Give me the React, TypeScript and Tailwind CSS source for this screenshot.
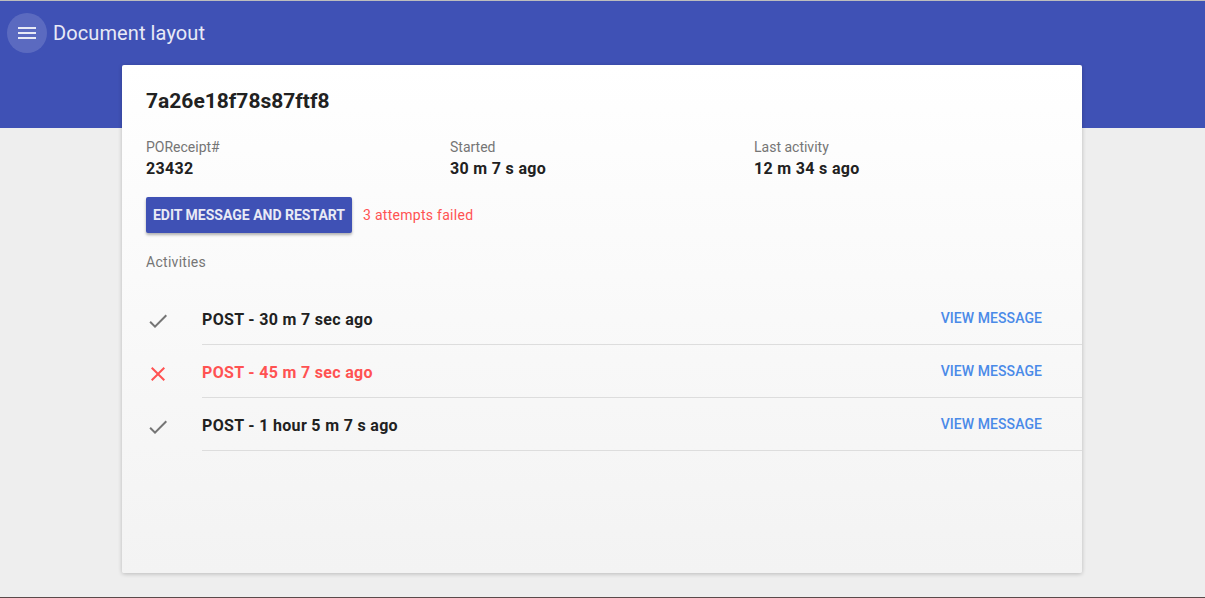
import React from "react";

const font = { fontFamily: "Roboto, 'Noto Sans', sans-serif" };

function Check() {
  return (
    <svg width="24" height="24" viewBox="0 0 24 24" className="shrink-0">
      <path d="M9 16.17L4.83 12l-1.42 1.41L9 19 21 7l-1.41-1.41z" fill="#757575" />
    </svg>
  );
}

function Cross() {
  return (
    <svg width="24" height="24" viewBox="0 0 24 24" className="shrink-0">
      <path
        d="M19 6.41L17.59 5 12 10.59 6.41 5 5 6.41 10.59 12 5 17.59 6.41 19 12 13.41 17.59 19 19 17.59 13.41 12z"
        fill="#ff5252"
      />
    </svg>
  );
}

const rows = [
  { text: "POST - 30 m 7 sec ago", ok: true },
  { text: "POST - 45 m 7 sec ago", ok: false },
  { text: "POST - 1 hour 5 m 7 s ago", ok: true },
];

export default function App() {
  return (
    <div
      className="w-[1205px] h-[598px] bg-[#eeeeee] border-t border-t-[#bdbdbd] border-b border-b-[#5a4a4a] overflow-hidden"
      style={font}
    >
      <div className="h-[127px] bg-[#3f51b5]">
        <div className="h-[64px] flex items-center pl-[7px]">
          <div className="w-[40px] h-[40px] rounded-full bg-white/15 flex items-center justify-center">
            <svg width="24" height="24" viewBox="0 0 24 24">
              <path d="M3 18h18v-2H3v2zm0-5h18v-2H3v2zm0-7v2h18V6H3z" fill="#e8eaf6" />
            </svg>
          </div>
          <div className="ml-[6px] text-[20px] text-[#e8eaf6] leading-none tracking-[0.005em]">Document layout</div>
        </div>
      </div>
      <div className="relative -mt-[63px] ml-[122px] w-[960px] h-[508px] rounded-[2px] bg-gradient-to-b from-white to-[#f3f3f3] shadow-[0_1px_4px_rgba(0,0,0,0.22)]">
        <div className="pt-[22px] pl-[24px]">
          <div className="text-[21px] font-bold text-[#212121] leading-[28px]">7a26e18f78s87ftf8</div>
          <div className="mt-[23px] grid grid-cols-3 w-[912px]">
            {[
              ["POReceipt#", "23432"],
              ["Started", "30 m 7 s ago"],
              ["Last activity", "12 m 34 s ago"],
            ].map(([l, v]) => (
              <div key={l}>
                <div className="text-[14px] text-[#757575] leading-[18px]">{l}</div>
                <div className="mt-[3px] text-[16px] font-bold text-[#212121] leading-[20px] tracking-[0.02em]">{v}</div>
              </div>
            ))}
          </div>
          <div className="mt-[18px] flex items-center">
            <div className="h-[36px] w-[206px] rounded-[2px] bg-[#3f51b5] shadow-[0_2px_3px_rgba(0,0,0,0.3)] flex items-center justify-center text-[14px] font-bold text-[#e8eaf6] uppercase whitespace-nowrap">
              Edit message and restart
            </div>
            <div className="ml-[11px] text-[14px] tracking-[0.02em] text-[#ff5252]">3 attempts failed</div>
          </div>
          <div className="mt-[20px] text-[14px] tracking-[0.02em] text-[#757575] leading-[18px]">Activities</div>
        </div>
        <div className="mt-[21px]">
          {rows.map((r, i) => (
            <div key={i} className="flex items-stretch h-[53px] pl-[24px]">
              <div className="w-[56px] flex items-center pt-[4px]">{r.ok ? <Check /> : <Cross />}</div>
              <div className="flex-1 flex items-center border-b border-b-[#dddddd] pr-[40px] pt-[4px]">
                <div className={`flex-1 text-[16px] font-bold tracking-[0.02em] ${r.ok ? "text-[#212121]" : "text-[#ff5252]"}`}>
                  {r.text}
                </div>
                <div className="text-[14px] font-medium tracking-[0.005em] text-[#4a8ae8] uppercase -mt-[3px]">View message</div>
              </div>
            </div>
          ))}
        </div>
      </div>
    </div>
  );
}
